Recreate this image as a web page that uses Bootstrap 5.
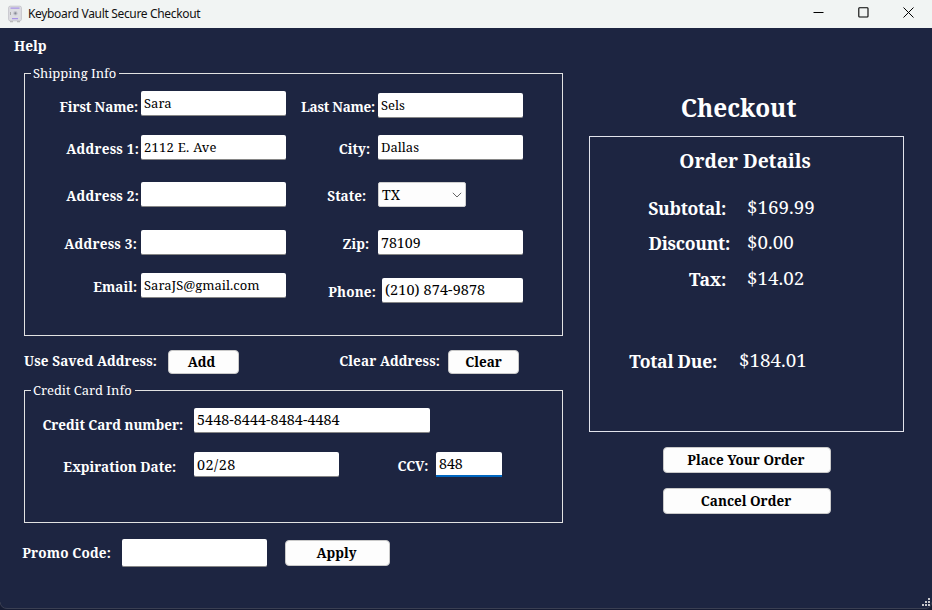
<!DOCTYPE html>
<html lang="en">
<head>
<meta charset="utf-8">
<meta name="viewport" content="width=device-width, initial-scale=1">
<title>Keyboard Vault Secure Checkout</title>
<link rel="stylesheet" href="https://cdn.jsdelivr.net/npm/bootstrap@5.3.0/dist/css/bootstrap.min.css">
<style>
  body { width: 932px; height: 610px; background: #1d2541; color: #fff; white-space: nowrap;
    font: 13px/20px "Noto Serif", "DejaVu Serif Condensed", "Liberation Serif", serif; }
  .titlebar { height: 28px; background: #f1f4f3; color: #111; padding-left: 7px;
    font: 12px/26px "Noto Sans", "Open Sans", sans-serif; letter-spacing: -.34px; }
  .app-icon { margin-right: 5px; }
  .win-controls { margin: -3px 18px 0 0; gap: 34px; }
  .menu { height: 45px; padding: 8px 0 0 14px; font-size: 13.7px; font-weight: 700; margin-left: -24px; }

  .left-pane { width: 563px; padding-left: 24px; }
  .group-box { position: relative; border: 1px solid #e2e2e2; }
  .group-box legend { position: absolute; top: -11px; left: 6px; width: auto; margin: 0; padding: 0 3px 0 2px;
    background: #1d2541; font-size: 13px; line-height: 20px; letter-spacing: -.05px; }
  .shipping { height: 263px; }
  .credit { height: 133px; }

  .lbl { flex: none; padding-top: 4px; font-size: 13.5px; font-weight: 700; line-height: 20px; text-align: right; }
  .lbl-tight { letter-spacing: -.22px; }
  .lbl-wide { letter-spacing: .22px; }
  .field { flex: none; width: 145px; height: 25px; padding: 0 3px; border: 0; border-bottom: 1px solid #868686;
    border-radius: 2px; background: #fff; color: #000; font: inherit; line-height: 24px; outline: 0; }
  .field-street { letter-spacing: .25px; }
  .num { font-size: 14.2px; }
  .num-wide { font-size: 14.4px; letter-spacing: .5px; }
  .field-phone { width: 141px; padding-bottom: 1px; font-size: 14.4px; letter-spacing: .12px; }
  .field-card { width: 236px; padding-bottom: 1px; font-size: 14.3px; letter-spacing: .08px; }
  .field-ccv { width: 66px; border-bottom: 2px solid #0067c0; border-radius: 2px 2px 0 0; }
  .field-promo { height: 28px; }
  .combo { display: flex; align-items: center; justify-content: space-between; width: 88px; border: 1px solid #cfcfcf;
    background: #fdfdfd; }

  .line { display: flex; height: 25px; }
  .col-a { width: 261px; }
  .col-a .lbl { width: 116px; padding-right: 2px; }
  .col-a .lbl-in { padding-right: 4px; }
  .col-a .drop { padding: 6px 3px 0 0; letter-spacing: -.1px; }
  .col-b .lbl { width: 92px; padding-right: 3px; }
  .col-b .r8 { padding-right: 8px; }
  .col-b .r9 { padding-right: 9px; }
  .col-b .r12 { padding-right: 12px; }
  .col-b .lbl-phone { width: 96px; padding-right: 6px; letter-spacing: .15px; }
  .t17 { margin-top: 17px; } .t18 { margin-top: 18px; } .t19 { margin-top: 19px; }
  .t22 { margin-top: 22px; } .t23 { margin-top: 23px; }

  .btn-win { flex: none; height: 24px; padding: 0; border: 1px solid #c9c9c9; border-radius: 4px; background: #fdfdfd;
    color: #000; font-size: 13.5px; font-weight: 700; line-height: 22px; }
  .btn-win:hover { background: #fff; color: #000; }
  .btn-sm-w { width: 71px; }
  .saved { height: 54px; padding-top: 14px; }
  .saved .lbl { padding-top: 1px; letter-spacing: .1px; }
  .lbl-saved { width: 144px; padding-right: 11px; }
  .lbl-clear { width: 209px; padding-right: 8px; }
  .lbl-card { width: 169px; padding: 7px 11px 0 0; letter-spacing: -.06px; }
  .lbl-exp { width: 169px; padding: 5px 18px 0 0; }
  .lbl-ccv { width: 97px; padding: 4px 8px 0 0; letter-spacing: -.25px; }
  .promo { margin: 16px 0 0 -2px; }
  .lbl-promo { width: 100px; padding-right: 11px; letter-spacing: .15px; }
  .btn-apply { width: 105px; height: 26px; margin: 1px 0 0 18px; line-height: 24px; padding-right: 2px; }

  .right-pane { width: 315px; margin-left: 26px; }
  .page-head { margin: 63px 0 0; font-size: 24.4px; font-weight: 700; line-height: 34px; text-align: center; padding-right: 16px; }
  .order-box { height: 296px; margin-top: 11px; border: 1px solid #e2e4ec; }
  .order-box h2 { margin: 11px 3px 0 0; font-size: 19.2px; font-weight: 700; line-height: 26px; text-align: center; }
  .sum-line { display: flex; height: 26px; line-height: 26px; font-size: 18.8px; }
  .sum-line b { width: 157px; padding-top: 1px; font-size: 17.6px; letter-spacing: -.3px; text-align: right; }
  .sum-line .k-sub { padding-right: 21px; }
  .sum-line .k-disc { padding-right: 17px; }
  .sum-line .k-total { width: 149px; padding-right: 22px; }
  .sum-first { margin-top: 20px; } .sum-second { margin-top: 9px; } .sum-third { margin-top: 10px; } .sum-total { margin-top: 56px; }
  .actions { gap: 15px; margin: 15px 0 0 74px; }
  .actions .btn-win { width: 168px; height: 26px; line-height: 24px; padding-right: 2px; }
  .grip { position: absolute; right: 2px; bottom: 4px; }
  .edge { position: absolute; left: 0; bottom: 0; }
</style>
</head>
<body class="d-flex flex-column overflow-hidden position-relative">
<header class="titlebar d-flex align-items-center flex-shrink-0">
  <svg class="app-icon" width="16" height="18" viewBox="0 0 16 18"><path d="M3 15.5h3v1.8H3zM10 15.5h3v1.8h-3z" fill="#b5b5b5"/><rect x="1.6" y="1.2" width="12.8" height="14.6" rx="1.5" fill="#dddde2" stroke="#c8c8ce"/><path d="M3.5 3.2h9M5 13.7h6" stroke="#a893e6" stroke-width="1.2"/><circle cx="8.4" cy="8.3" r="2.2" fill="#c4c4cc"/><circle cx="8.4" cy="8.3" r="1.1" fill="#858894"/><path d="M3.5 7v3" stroke="#aaa"/></svg>
  <span>Keyboard Vault Secure Checkout</span>
  <div class="win-controls ms-auto d-flex align-items-center">
    <svg width="11" height="11" viewBox="0 0 11 11"><path d="M.5 5.5h10" stroke="#000"/></svg>
    <svg width="11" height="11" viewBox="0 0 11 11"><rect x=".8" y=".8" width="9.2" height="9.2" rx=".8" fill="none" stroke="#000" stroke-width="1.1"/></svg>
    <svg width="11" height="11" viewBox="0 0 11 11"><path d="M.5.5l10 10M10.5.5l-10 10" stroke="#000"/></svg>
  </div>
</header>
<main class="d-flex flex-grow-1">
  <section class="left-pane flex-shrink-0">
    <nav class="menu">Help</nav>
    <fieldset class="group-box shipping d-flex">
      <legend>Shipping Info</legend>
      <div class="col-a">
        <div class="line t17"><label class="lbl drop">First Name:</label><input class="field" value="Sara"></div>
        <div class="line t19"><label class="lbl lbl-wide">Address 1:</label><input class="field field-street" value="2112 E. Ave"></div>
        <div class="line t22"><label class="lbl lbl-wide">Address 2:</label><input class="field"></div>
        <div class="line t23"><label class="lbl lbl-wide lbl-in">Address 3:</label><input class="field"></div>
        <div class="line t18"><label class="lbl lbl-in">Email:</label><input class="field" value="SaraJS@gmail.com"></div>
      </div>
      <div class="col-b">
        <div class="line t19"><label class="lbl lbl-tight">Last Name:</label><input class="field" value="Sels"></div>
        <div class="line t17"><label class="lbl r8">City:</label><input class="field" value="Dallas"></div>
        <div class="line t22"><label class="lbl r12">State:</label><div class="field combo"><span class="num">TX</span>
          <svg width="10" height="6" viewBox="0 0 10 6"><path d="M.8.8L5 5 9.2.8" fill="none" stroke="#666"/></svg></div></div>
        <div class="line t23"><label class="lbl r9">Zip:</label><input class="field num" value="78109"></div>
        <div class="line t23"><label class="lbl lbl-phone">Phone:</label><input class="field field-phone" value="(210) 874-9878"></div>
      </div>
    </fieldset>
    <div class="saved d-flex">
      <label class="lbl lbl-saved">Use Saved Address:</label><button class="btn btn-win btn-sm-w pe-1">Add</button>
      <label class="lbl lbl-clear">Clear Address:</label><button class="btn btn-win btn-sm-w">Clear</button>
    </div>
    <fieldset class="group-box credit">
      <legend>Credit Card Info</legend>
      <div class="line t17"><label class="lbl lbl-card">Credit Card number:</label><input class="field field-card" value="5448-8444-8484-4484"></div>
      <div class="line t19"><label class="lbl lbl-exp">Expiration Date:</label><input class="field num-wide" value="02/28"><label class="lbl lbl-ccv">CCV:</label><input class="field num field-ccv" value="848"></div>
    </fieldset>
    <div class="promo d-flex"><label class="lbl lbl-promo">Promo Code:</label><input class="field field-promo"><button class="btn btn-win btn-apply">Apply</button></div>
  </section>
  <section class="right-pane flex-shrink-0">
    <h1 class="page-head">Checkout</h1>
    <div class="order-box">
      <h2>Order Details</h2>
      <div class="sum-line sum-first"><b class="k-sub">Subtotal:</b><span>$169.99</span></div>
      <div class="sum-line sum-second"><b class="k-disc">Discount:</b><span>$0.00</span></div>
      <div class="sum-line sum-third"><b class="k-sub">Tax:</b><span>$14.02</span></div>
      <div class="sum-line sum-total"><b class="k-total">Total Due:</b><span>$184.01</span></div>
    </div>
    <div class="actions d-flex flex-column">
      <button class="btn btn-win">Place Your Order</button>
      <button class="btn btn-win">Cancel Order</button>
    </div>
  </section>
</main>
<svg class="edge" width="932" height="8" viewBox="0 0 932 8"><path d="M0 0Q1 6.5 7 6.5H925Q931 6.5 932 0V8H0z" fill="#161c33"/><path d="M0 0Q1 6.5 7 6.5H925Q931 6.5 932 0" fill="none" stroke="#3a3f52"/></svg>
<svg class="grip" width="8" height="8" viewBox="0 0 8 8"><path d="M6 0h2v2H6zM3 3h2v2H3zM6 3h2v2H6zM0 6h2v2H0zM3 6h2v2H3zM6 6h2v2H6z" fill="#c8c8cc"/></svg>
</body>
</html>
